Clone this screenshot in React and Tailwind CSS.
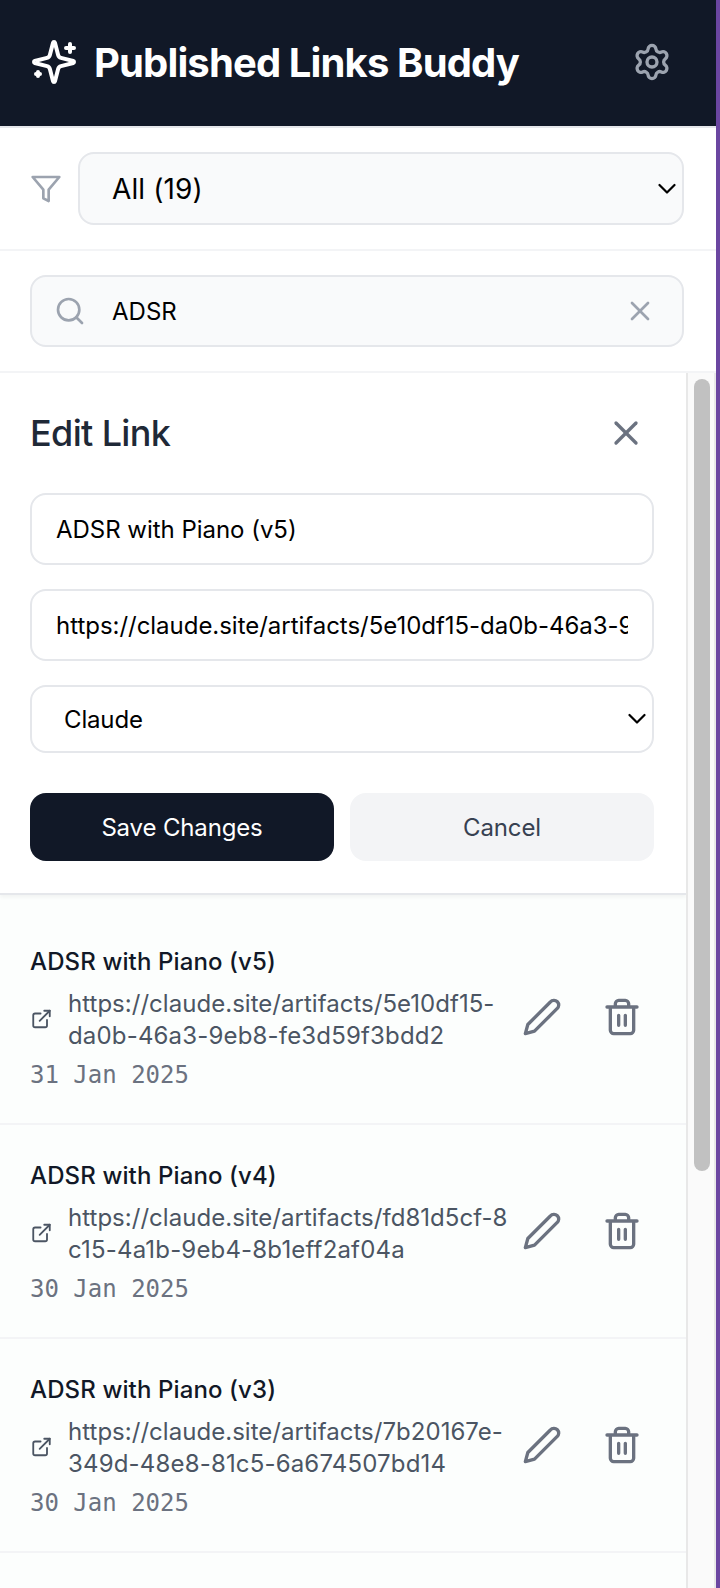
import React from "react";
import { ExternalLink, Search, Settings, X } from "lucide-react";

const links = [
  { title: "ADSR with Piano (v5)", url: ["https://claude.site/artifacts/5e10df15-", "da0b-46a3-9eb8-fe3d59f3bdd2"], date: "31 Jan 2025" },
  { title: "ADSR with Piano (v4)", url: ["https://claude.site/artifacts/fd81d5cf-8", "c15-4a1b-9eb4-8b1eff2af04a"], date: "30 Jan 2025" },
  { title: "ADSR with Piano (v3)", url: ["https://claude.site/artifacts/7b20167e-", "349d-48e8-81c5-6a674507bd14"], date: "30 Jan 2025" },
];

function Icon({ className, children }) {
  return (
    <svg className={className} viewBox="0 0 24 24" fill="none" stroke="currentColor" strokeWidth="2" strokeLinecap="round" strokeLinejoin="round">
      {children}
    </svg>
  );
}

function Chevron() {
  return (
    <svg className="h-[12px] w-[18px] shrink-0" viewBox="0 0 18 12" fill="none" stroke="#000" strokeWidth="2.2" strokeLinecap="round" strokeLinejoin="round">
      <path d="M1.5 2 9 9.5 16.5 2" />
    </svg>
  );
}

function LinkRow({ link }) {
  return (
    <li className="flex h-[214px] items-center border-b-2 border-[#f3f4f6] pr-[44px] pl-[30px]">
      <div className="w-[474px] shrink-0 pt-[2px]">
        <h3 className="text-2xl leading-8 font-medium tracking-[0.12px] text-[#111827]">{link.title}</h3>
        <div className="mt-[10px] flex items-center text-2xl leading-8 text-[#4b5563]">
          <ExternalLink className="mr-[15px] size-[23px] shrink-0 pb-[1px]" strokeWidth={2} />
          <span className="whitespace-nowrap">
            <span className="tracking-[0.03px]">{link.url[0]}</span>
            <br />
            <span className="tracking-[0.17px]">{link.url[1]}</span>
          </span>
        </div>
        <p className="mt-[7px] font-['DejaVu_Sans_Mono',monospace] text-2xl leading-8 text-[#6b7280]">{link.date}</p>
      </div>
      <div className="ml-auto flex gap-10 text-[#6b7280]">
        <Icon className="size-10">
          <path d="M17 3a2.850 2.830 0 1 1 4 4L7.500 20.500 2 22l1.500-5.500Z" />
        </Icon>
        <Icon className="size-10">
          <path d="M3 6h18M19 6v14c0 1-1 2-2 2H7c-1 0-2-1-2-2V6M8 6V4c0-1 1-2 2-2h4c1 0 2 1 2 2v2M10 11v6M14 11v6" />
        </Icon>
      </div>
    </li>
  );
}

const inputClass =
  "h-[72px] w-full rounded-2xl border-2 border-[#e5e7eb] px-6 pt-[1px] text-2xl tracking-[-0.03px] text-black outline-none";

export default function App() {
  return (
    <div className="flex h-[1588px] w-[720px] flex-col overflow-hidden border-r-4 border-[#6b46a1] bg-white font-[Inter,sans-serif] text-black">
      <header className="flex h-[128px] shrink-0 items-center border-b-2 border-[#e5e7eb] bg-[#111827] px-[30px] pb-[2px]">
        <Icon className="size-[48px] text-white">
          <path d="M9.937 15.5A2 2 0 0 0 8.500 14.063l-6.135-1.582a.5.5 0 0 1 0-.962L8.500 9.936A2 2 0 0 0 9.937 8.500l1.582-6.135a.5.5 0 0 1 .963 0L14.063 8.500A2 2 0 0 0 15.500 9.937l6.135 1.581a.5.5 0 0 1 0 .964L15.500 14.063a2 2 0 0 0-1.437 1.437l-1.582 6.135a.5.5 0 0 1-.963 0z" />
          <path d="M20 3v4M22 5h-4M4 17v2M5 18H3" />
        </Icon>
        <h1 className="ml-4 pt-[2px] text-[40px] leading-[56px] font-bold tracking-[-0.87px] text-white">Published Links Buddy</h1>
        <Settings className="mr-[14px] ml-auto size-10 text-[#9ca3af]" strokeWidth={2} />
      </header>

      <div className="flex h-[123px] shrink-0 items-center border-b-2 border-[#f3f4f6] pr-8 pl-[30px]">
        <Icon className="size-8 text-[#9ca3af]">
          <path d="M22 3H2l8 9.460V19l4 2v-8.540L22 3z" />
        </Icon>
        <div className="ml-4 flex h-[73px] flex-1 items-center justify-between rounded-2xl border-2 border-[#e5e7eb] bg-[#f9fafb] pr-[6px] pl-8 text-[28px]">
          <span className="tracking-[0.12px]">All (19)</span>
          <Chevron />
        </div>
      </div>

      <div className="h-[122px] shrink-0 border-b-2 border-[#f3f4f6] pt-6 pr-8 pl-[30px]">
        <div className="flex h-[72px] items-center rounded-2xl border-2 border-[#e5e7eb] bg-[#f9fafb] pr-[26px] pl-[22px]">
          <Search className="size-8 text-[#9ca3af]" strokeWidth={2} />
          <input className="ml-[26px] min-w-0 flex-1 bg-transparent pt-[2px] text-2xl text-black outline-none" defaultValue="ADSR" />
          <X className="size-8 text-[#9ca3af]" strokeWidth={2} />
        </div>
      </div>

      <div className="flex min-h-0 flex-1">
        <main className="w-[686px] shrink-0 overflow-hidden bg-[#fcfefd]">
          <section className="h-[522px] border-b-2 border-[#e5e7eb] bg-white px-8 pt-8 pl-[30px] shadow-[0_2px_4px_rgba(0,0,0,0.05)]">
            <div className="mb-[32px] flex h-14 items-center justify-between">
              <h2 className="text-[36px] leading-[56px] font-medium tracking-[-0.65px] text-[#1f2937]">Edit Link</h2>
              <X className="mr-[8px] size-10 text-[#6b7280]" strokeWidth={2} />
            </div>
            <div className="flex flex-col gap-6">
              <input className={inputClass} defaultValue="ADSR with Piano (v5)" />
              <input className={inputClass} defaultValue="https://claude.site/artifacts/5e10df15-da0b-46a3-9eb8-fe3d59f3bdd2" />
              <div className="flex h-[68px] items-center justify-between rounded-2xl border-2 border-[#e5e7eb] pr-[6px] pl-8 text-2xl">
                <span className="pt-[2px] tracking-[-0.15px]">Claude</span>
                <Chevron />
              </div>
            </div>
            <div className="mt-10 flex gap-4 text-2xl tracking-[-0.15px]">
              <button className="h-[68px] flex-1 rounded-2xl bg-[#111827] pt-[2px] text-white">Save Changes</button>
              <button className="h-[68px] flex-1 rounded-2xl bg-[#f3f4f6] pt-[2px] text-[#374151]">Cancel</button>
            </div>
          </section>
          <ul className="pt-4">
            {links.map((link) => (
              <LinkRow key={link.title} link={link} />
            ))}
          </ul>
        </main>
        <div className="w-[30px] shrink-0 border-x-2 border-[#e8e8e8] bg-[#fafafa] px-[6px] pt-[6px]">
          <div className="h-[792px] w-[16px] rounded-full bg-[#c1c1c1]" />
        </div>
      </div>
    </div>
  );
}
